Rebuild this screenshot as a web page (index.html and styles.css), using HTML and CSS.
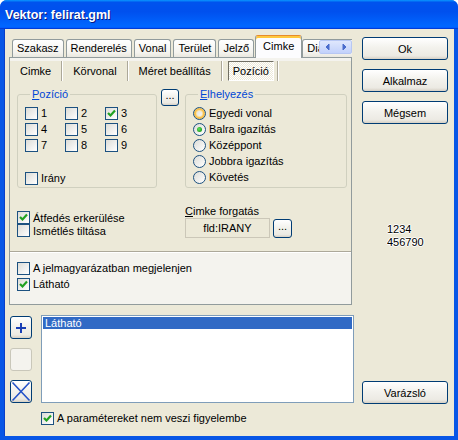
FILE: index.html
```html
<!DOCTYPE html>
<html lang="hu">
<head>
<meta charset="utf-8">
<title>Vektor: felirat.gml</title>
<link rel="stylesheet" href="styles.css">
</head>
<body>
<div class="window">
  <div class="titlebar"><span class="title">Vektor: felirat.gml</span></div>
  <div class="frame">
    <div class="main">
      <div class="tabs">
        <div class="tab">Szakasz</div>
        <div class="tab">Renderelés</div>
        <div class="tab">Vonal</div>
        <div class="tab">Terület</div>
        <div class="tab">Jelző</div>
        <div class="tab active">Cimke</div>
        <div class="tab">Diagram</div>
        <div class="tabscroll">
          <span class="arrow"><svg width="16" height="12" viewBox="0 0 16 12"><path d="M9 3 L6 6 L9 9 Z" fill="#4a6ccc" stroke="#4a6ccc" stroke-width="1"/></svg></span>
          <span class="arrow"><svg width="16" height="12" viewBox="0 0 16 12"><path d="M7 3 L10 6 L7 9 Z" fill="#4a6ccc" stroke="#4a6ccc" stroke-width="1"/></svg></span>
        </div>
      </div>
      <div class="panel">
        <div class="subctl">
          <div class="subtabs">
            <div class="subtab">Cimke</div><i class="sep"></i>
            <div class="subtab">Körvonal</div><i class="sep"></i>
            <div class="subtab">Méret beállítás</div><i class="sep"></i>
            <div class="subtab active">Pozíció</div><i class="sep"></i>
          </div>
          <div class="subpage">
            <div class="grouprow">
              <fieldset class="group pos">
                <legend><u>P</u>ozíció</legend>
                <div class="grid3">
                  <label class="chk"><span class="cb"></span>1</label>
                  <label class="chk"><span class="cb"></span>2</label>
                  <label class="chk"><span class="cb"><svg viewBox="0 0 11 11" width="11" height="11"><polyline points="2,5 4.5,7.5 9,2.5" fill="none" stroke="#21a121" stroke-width="2.2"/></svg></span>3</label>
                  <label class="chk"><span class="cb"></span>4</label>
                  <label class="chk"><span class="cb"></span>5</label>
                  <label class="chk"><span class="cb"></span>6</label>
                  <label class="chk"><span class="cb"></span>7</label>
                  <label class="chk"><span class="cb"></span>8</label>
                  <label class="chk"><span class="cb"></span>9</label>
                </div>
                <label class="chk irany"><span class="cb"></span>Irány</label>
              </fieldset>
              <button class="btn dots">...</button>
              <fieldset class="group place">
                <legend><u>E</u>lhelyezés</legend>
                <label class="rad"><span class="rb hover"></span>Egyedi vonal</label>
                <label class="rad"><span class="rb on"></span>Balra igazítás</label>
                <label class="rad"><span class="rb"></span>Középpont</label>
                <label class="rad"><span class="rb"></span>Jobbra igazítás</label>
                <label class="rad"><span class="rb"></span>Követés</label>
              </fieldset>
            </div>
            <div class="optrow">
              <div class="opts">
                <label class="chk row13"><span class="cb"><svg viewBox="0 0 11 11" width="11" height="11"><polyline points="2,5 4.5,7.5 9,2.5" fill="none" stroke="#21a121" stroke-width="2.2"/></svg></span>Átfedés erkerülése</label>
                <label class="chk row13"><span class="cb"></span>Ismétlés tiltása</label>
              </div>
              <div class="rotate">
                <div class="rotlabel"><u>C</u>imke forgatás</div>
                <div class="rotfield">
                  <div class="field">fld:IRANY</div>
                  <button class="btn dots small">...</button>
                </div>
              </div>
            </div>
          </div>
        </div>
        <div class="lower">
          <label class="chk"><span class="cb"></span>A jelmagyarázatban megjelenjen</label>
          <label class="chk"><span class="cb"><svg viewBox="0 0 11 11" width="11" height="11"><polyline points="2,5 4.5,7.5 9,2.5" fill="none" stroke="#21a121" stroke-width="2.2"/></svg></span>Látható</label>
        </div>
      </div>
      <div class="listarea">
        <div class="sidebtns">
          <button class="btn icon"><svg width="20" height="21" viewBox="0 0 20 21"><path d="M10 6 V16 M5 11 H15" stroke="#1a3fb5" stroke-width="2"/></svg></button>
          <button class="btn icon disabled"></button>
          <button class="btn icon"><svg width="20" height="21" viewBox="0 0 20 21"><path d="M1.5 1.5 L18.5 19.5 M18.5 1.5 L1.5 19.5" stroke="#2452c8" stroke-width="1.6"/></svg></button>
        </div>
        <div class="listbox"><div class="item sel">Látható</div></div>
      </div>
      <label class="chk final"><span class="cb"><svg viewBox="0 0 11 11" width="11" height="11"><polyline points="2,5 4.5,7.5 9,2.5" fill="none" stroke="#21a121" stroke-width="2.2"/></svg></span>A paramétereket nem veszi figyelembe</label>
    </div>
    <div class="side">
      <button class="btn big">Ok</button>
      <button class="btn big">Alkalmaz</button>
      <button class="btn big">Mégsem</button>
      <div class="info">1234<br>456790</div>
      <button class="btn big wizard">Varázsló</button>
    </div>
  </div>
</div>
</body>
</html>
```

FILE: styles.css
```css
* { box-sizing: border-box; }
html, body { margin: 0; padding: 0; }
body {
  width: 458px; height: 440px; overflow: hidden; background: #fff;
  font-family: "Liberation Sans", Arial, sans-serif;
  font-size: 11px; color: #000;
}
u { text-decoration: underline; text-underline-offset: 1px; }

.window {
  width: 458px; height: 440px; display: flex; flex-direction: column;
  background: #0054e3; border-radius: 7px 7px 0 0; overflow: hidden;
}
.titlebar {
  height: 29px; flex: none; display: flex; align-items: center; padding-left: 5px;
  background: linear-gradient(180deg, #0997ff, #0053ee 8%, #0050ee 40%, #0066ff 88%, #0066ff 93%, #005bff 95%, #003dd7 96%, #003dd7);
}
.title {
  font-family: "Liberation Sans", Arial, sans-serif; font-weight: bold; font-size: 12.5px;
  color: #fff; text-shadow: 1px 1px 0 #0a1883;
}
.frame {
  flex: 1; display: flex; gap: 8px; background: #ece9d8;
  border: 4px solid #0856e6; border-top: 0;
  box-shadow: inset 1px 0 #0a3fc8;
  padding: 6px 6px 0 5px;
}

/* main column */
.main { width: 345px; flex: none; display: flex; flex-direction: column; }

.tabs {
  position: relative; height: 23px; margin-bottom: -1px; width: 343px;
  display: flex; align-items: flex-end; padding-left: 3px; overflow: hidden;
}
.tab {
  height: 19px; line-height: 17px; padding: 0 4px; margin-right: 2px;
  border: 1px solid #919b9c; border-bottom: 0; border-radius: 3px 3px 0 0;
  background: linear-gradient(#ffffff, #f4f3ee 70%, #e7e5dc);
  white-space: nowrap; flex: none;
}
.tab.active {
  height: 23px; line-height: 19px; padding: 1px 7px 0;
  margin: 0 0 0 -1px; position: relative; z-index: 2;
  border-top-color: #e68b2c; box-shadow: inset 0 2px 0 #ffc83c;
  background: #fcfcfe;
}
.tabscroll {
  position: absolute; right: 0; top: 5px; width: 33px; height: 14px; z-index: 3;
  display: flex; background: linear-gradient(#dfe7fd, #c2d1fb);
  border: 1px solid #b7c7f3; border-radius: 2px;
}
.arrow { flex: 1; display: flex; align-items: center; justify-content: center; }

.panel {
  width: 343px; border: 1px solid #919b9c; background: #f4f3ee;
  position: relative; z-index: 1;
}
.subctl { background: #ece9d8; border-bottom: 1px solid #aca899; box-shadow: 0 1px 0 #fff; }
.subtabs { display: flex; height: 20px; margin-top: 3px; }
.subtab { padding: 0 10px; line-height: 20px; white-space: nowrap; }
.subtab.active {
  margin: 0 3px 0 5px; padding: 0 4px; line-height: 18px;
  border: 1px solid; border-color: #716f64 #fff #fff #716f64;
  background: repeating-conic-gradient(#ffffff 0 25%, #ece9d8 0 50%) 0 0 / 2px 2px;
}
.sep { width: 2px; border-left: 1px solid #aca899; border-right: 1px solid #fff; }

.subpage { padding: 7px 0 13px 7px; }
.grouprow { display: flex; align-items: flex-start; }
.group {
  margin: 0; border: 1px solid #d0d0bf; border-radius: 3px;
  height: 100px; min-inline-size: 0;
}
.group legend { padding: 0 2px; margin-left: 5px; color: #0046d5; line-height: 13px; }
.pos { width: 140px; padding: 4px 0 0 7px; }
.place { width: 162px; margin-left: 6px; padding: 4px 0 0 7px; }

.grid3 { display: grid; grid-template-columns: repeat(3, 40px); grid-auto-rows: 16px; }
.chk { display: flex; align-items: center; height: 16px; gap: 3px; white-space: nowrap; }
.chk.irany { margin-top: 17px; }
.cb {
  width: 13px; height: 13px; flex: none; border: 1px solid #1c5180;
  background: linear-gradient(135deg, #dcdcd7, #ffffff);
  display: flex; align-items: center; justify-content: center;
}
.cb svg { display: block; }

.rad { display: flex; align-items: center; height: 16px; gap: 3px; white-space: nowrap; }
.rb {
  width: 13px; height: 13px; flex: none; border-radius: 50%; border: 1px solid #1c5180;
  background: linear-gradient(135deg, #dcdcd7, #ffffff);
  position: relative;
}
.rb.hover { box-shadow: inset 0 0 0 2px #f8c14f, inset 0 0 0 3px #fce3a6; }
.rb.on::after {
  content: ""; position: absolute; left: 3px; top: 3px; width: 5px; height: 5px; border-radius: 50%;
  background: radial-gradient(circle at 40% 40%, #5fe65f, #21a121 70%);
}

.btn {
  font: inherit; color: #000; padding: 0; margin: 0;
  border: 1px solid #003c74; border-radius: 3px;
  background: linear-gradient(180deg, #ffffff, #f3f2ed 45%, #eceae3 85%, #d6d0c5);
  display: flex; align-items: center; justify-content: center;
}
.dots { width: 18px; height: 17px; margin: 1px 0 0 4px; line-height: 1; padding-bottom: 4px; }
.dots.small { width: 19px; height: 19px; margin: 1px 0 0 3px; }

.optrow { display: flex; margin-top: 17px; }
.opts { width: 168px; padding-top: 6px; }
.chk.row13 { height: 13px; }
.rotlabel { line-height: 13px; }
.rotfield { display: flex; align-items: flex-start; }
.field {
  width: 85px; height: 20px; line-height: 18px; text-align: center;
  border: 1px solid #cbc7b8; background: #ece9d8;
}

.lower { padding: 8px 0 12px 7px; }

.listarea { display: flex; margin-top: 10px; }
.sidebtns { display: flex; flex-direction: column; gap: 9px; margin: 1px 0 0 1px; }
.btn.icon { width: 22px; height: 23px; }
.btn.disabled { border-color: #c9c7ba; background: #f4f3ee; }
.listbox {
  width: 313px; height: 88px; margin-left: 9px; border: 1px solid #7f9db9; background: #fff;
  padding: 1px;
}
.item { height: 12px; line-height: 12px; padding-left: 2px; }
.item.sel { background: #316ac5; color: #fff; }

.chk.final { margin: 7px 0 0 32px; }

/* side column */
.side { width: 86px; flex: none; display: flex; flex-direction: column; gap: 9px; padding: 2px 0 32px; }
.btn.big { width: 86px; height: 23px; flex: none; }
.info {
  margin-top: 90px; padding-left: 25px; line-height: 13px;
  text-shadow: 1px 0 #fff, -1px 0 #fff, 0 1px #fff, 0 -1px #fff;
}
.wizard { margin-top: auto; }
```
